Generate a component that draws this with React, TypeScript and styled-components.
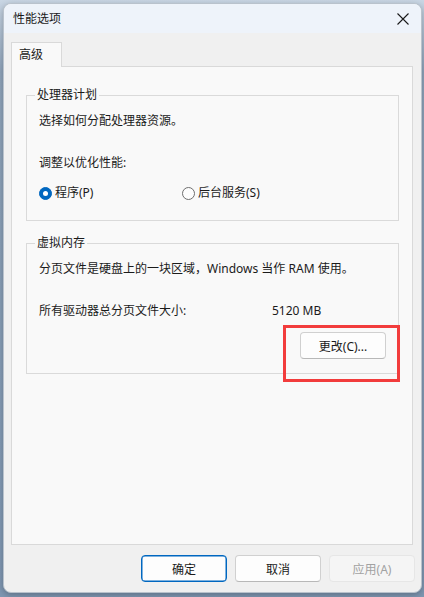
import styled, { createGlobalStyle } from "styled-components";

const GlobalStyle = createGlobalStyle`
  html, body {
    margin: 0;
    padding: 0;
  }
  body {
    width: 424px;
    height: 597px;
    overflow: hidden;
    background: linear-gradient(180deg, #c9d6e4 0%, #8fa4bb 12%, #7f97b2 100%);
    font-family: "Segoe UI", "Noto Sans", "Noto Sans CJK SC", sans-serif;
    font-size: 12px;
    color: #1b1b1b;
  }
`;

const Window = styled.div`
  box-sizing: border-box;
  margin: 3px 0 0 3px;
  width: 419px;
  height: 590px;
  display: flex;
  flex-direction: column;
  background: #f0f0f0;
  border: 1px solid #b9c2cc;
  border-radius: 8px;
  overflow: hidden;
  box-shadow: 0 2px 6px rgba(0, 0, 0, 0.25);
`;

const TitleBar = styled.div`
  height: 29px;
  flex: none;
  display: flex;
  align-items: center;
  justify-content: space-between;
  padding: 0 8px 0 9px;
  background: #eef3fa;
`;

const Title = styled.span`
  font-size: 12px;
  line-height: 16px;
  color: #1a1a1a;
`;

const CloseBtn = styled.button`
  width: 20px;
  height: 20px;
  padding: 0;
  border: none;
  background: transparent;
  display: flex;
  align-items: center;
  justify-content: center;
`;

const Body = styled.div`
  flex: 1;
  display: flex;
  flex-direction: column;
  padding: 9px 8px 9px 7px;
`;

const TabStrip = styled.div`
  display: flex;
  height: 24px;
`;

const Tab = styled.div`
  box-sizing: border-box;
  width: 51px;
  height: 25px;
  padding: 4px 0 0 7px;
  background: #f9f9f9;
  border: 1px solid #d9d9d9;
  border-bottom: none;
  position: relative;
  z-index: 1;
  line-height: 16px;
`;

const Panel = styled.div`
  box-sizing: border-box;
  height: 479px;
  display: flex;
  flex-direction: column;
  gap: 14px;
  padding: 20px 13px 0 14px;
  background: #f9f9f9;
  border: 1px solid #d9d9d9;
`;

const Group = styled.fieldset<{ $h: number }>`
  box-sizing: border-box;
  margin: 0;
  padding: 0 12px 0 12px;
  height: ${(p) => p.$h}px;
  border: 1px solid #dadada;
  display: flex;
  flex-direction: column;
  min-width: 0;
`;

const Legend = styled.legend`
  margin-left: -4px;
  padding: 0 2px;
  line-height: 16px;
  color: #1a1a1a;
`;

const Line = styled.div<{ $mt: number }>`
  margin-top: ${(p) => p.$mt}px;
  line-height: 16px;
  height: 16px;
  white-space: nowrap;
`;

const RadioRow = styled.div`
  margin-top: 14px;
  display: flex;
  align-items: center;
  height: 16px;
`;

const RadioItem = styled.label`
  display: flex;
  align-items: center;
  gap: 3px;
  width: 143px;
  line-height: 16px;
`;

const RadioDot = styled.span<{ $on?: boolean }>`
  box-sizing: border-box;
  width: 13px;
  height: 13px;
  border-radius: 50%;
  background: ${(p) => (p.$on ? "#0067c0" : "#fdfdfd")};
  border: 1px solid ${(p) => (p.$on ? "#0067c0" : "#6e6e6e")};
  display: flex;
  align-items: center;
  justify-content: center;
  &::after {
    content: "";
    display: ${(p) => (p.$on ? "block" : "none")};
    width: 5px;
    height: 5px;
    border-radius: 50%;
    background: #fff;
  }
`;

const SizeRow = styled.div`
  margin-top: 26px;
  display: flex;
  line-height: 16px;
`;

const SizeLabel = styled.span`
  width: 233px;
`;

const ButtonRow = styled.div<{ $mt: number }>`
  margin-top: ${(p) => p.$mt}px;
  display: flex;
  justify-content: flex-end;
  gap: 8px;
`;

const Highlight = styled.div`
  position: relative;
  &::before {
    content: "";
    position: absolute;
    left: -17px;
    top: -7px;
    right: -14px;
    bottom: -23px;
    border: 3px solid #f23c3c;
    pointer-events: none;
  }
`;

const Button = styled.button<{ $primary?: boolean }>`
  box-sizing: border-box;
  width: 86px;
  height: 27px;
  padding: 0;
  border-radius: 4px;
  font-family: inherit;
  font-size: 12px;
  color: ${(p) => (p.disabled ? "#a2a2a2" : "#1a1a1a")};
  background: ${(p) => (p.disabled ? "#f5f5f5" : "#fdfdfd")};
  border: 1px solid
    ${(p) => (p.$primary ? "#0067c0" : p.disabled ? "#e6e6e6" : "#d0d0d0")};
  border-bottom-color: ${(p) =>
    p.$primary ? "#0067c0" : p.disabled ? "#e6e6e6" : "#b8b8b8"};
  box-shadow: ${(p) => (p.$primary ? "inset 0 0 0 0.5px #0067c0" : "none")};
`;

const Footer = styled.div`
  margin-top: 10px;
  margin-right: -2px;
  display: flex;
  justify-content: flex-end;
  gap: 8px;
`;

export default function App() {
  return (
    <>
      <GlobalStyle />
      <Window>
        <TitleBar>
          <Title>性能选项</Title>
          <CloseBtn aria-label="关闭">
            <svg width="12" height="12" viewBox="0 0 12 12">
              <path d="M0.5 0.5 L11.5 11.5 M11.5 0.5 L0.5 11.5" stroke="#1a1a1a" strokeWidth="1.1" fill="none" />
            </svg>
          </CloseBtn>
        </TitleBar>
        <Body>
          <TabStrip>
            <Tab>高级</Tab>
          </TabStrip>
          <Panel>
            <Group $h={134}>
              <Legend>处理器计划</Legend>
              <Line $mt={10}>选择如何分配处理器资源。</Line>
              <Line $mt={26}>调整以优化性能:</Line>
              <RadioRow>
                <RadioItem>
                  <RadioDot $on />
                  程序(P)
                </RadioItem>
                <RadioItem>
                  <RadioDot />
                  后台服务(S)
                </RadioItem>
              </RadioRow>
            </Group>
            <Group $h={139}>
              <Legend>虚拟内存</Legend>
              <Line $mt={10}>分页文件是硬盘上的一块区域，Windows 当作 RAM 使用。</Line>
              <SizeRow>
                <SizeLabel>所有驱动器总分页文件大小:</SizeLabel>
                <span>5120 MB</span>
              </SizeRow>
              <ButtonRow $mt={13}>
                <Highlight>
                  <Button>更改(C)...</Button>
                </Highlight>
              </ButtonRow>
            </Group>
          </Panel>
          <Footer>
            <Button $primary>确定</Button>
            <Button>取消</Button>
            <Button disabled>应用(A)</Button>
          </Footer>
        </Body>
      </Window>
    </>
  );
}
